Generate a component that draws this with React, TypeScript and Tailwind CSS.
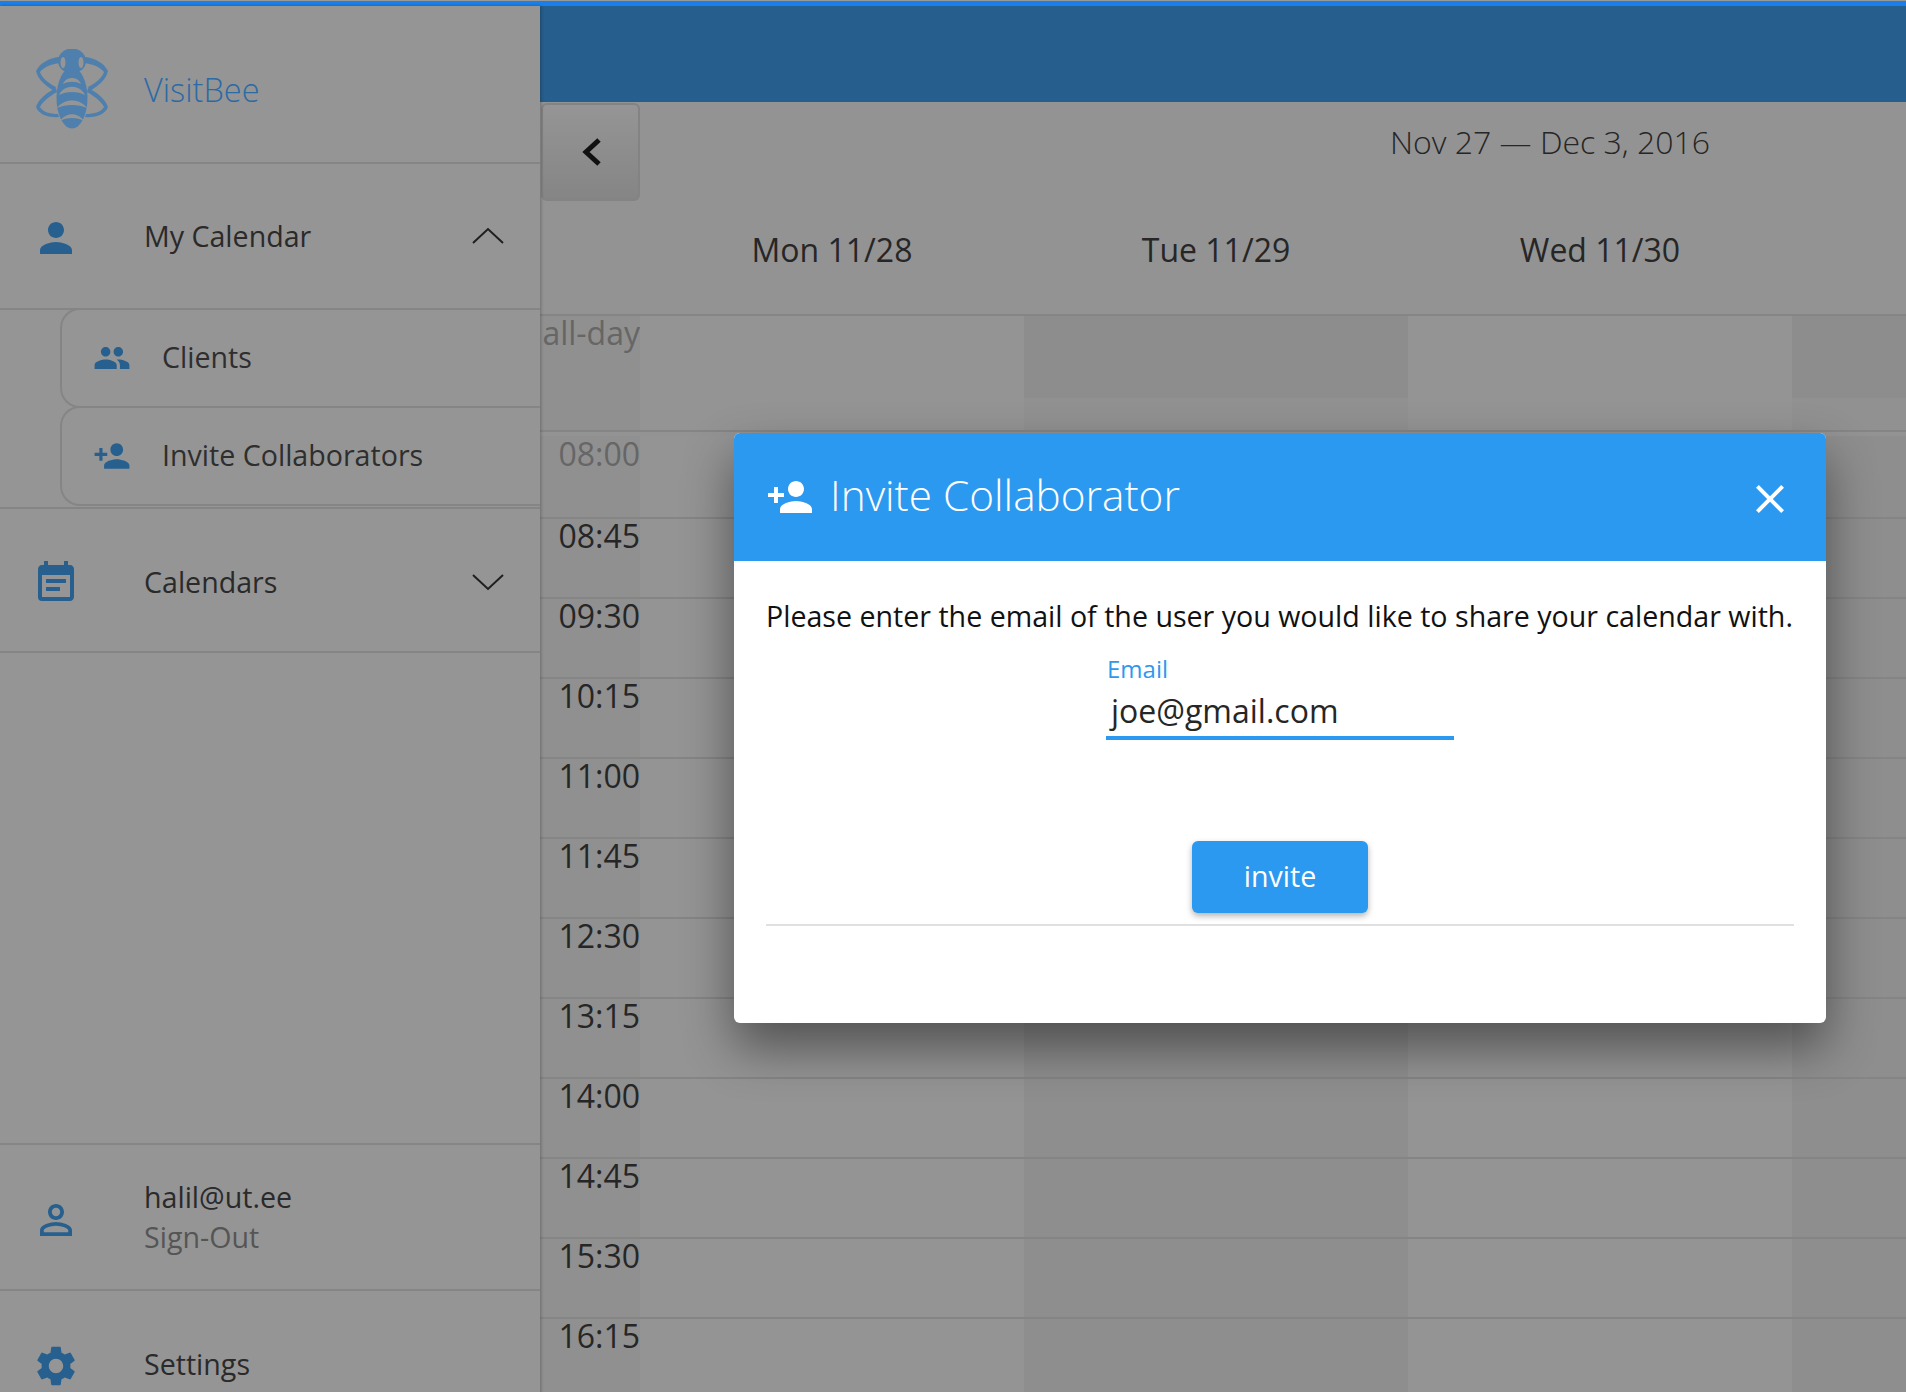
import { MdClose, MdEventNote, MdPeople, MdPerson, MdPersonAdd, MdPersonOutline, MdSettings } from 'react-icons/md';

const times = ['08:45', '09:30', '10:15', '11:00', '11:45', '12:30', '13:15', '14:00', '14:45', '15:30', '16:15'];

function BeeLogo() {
  return (
    <svg width="74" height="80" viewBox="0 0 74 80" fill="none">
      {/* upper wings */}
      <path d="M24 8 C14 9 5 14 1 22 C3 31 11 37 19 42 L21 38 C13 34 7 29 5 23 C9 18 16 15 25 14 Z" fill="#4f80ad" />
      <path d="M50 8 C60 9 69 14 73 22 C71 31 63 37 55 42 L53 38 C61 34 67 29 69 23 C65 18 58 15 49 14 Z" fill="#4f80ad" />
      {/* lower wings */}
      <path d="M21 39 C11 44 3 51 1 58 C4 66 14 69 24 68 L23 65 C15 65 8 63 5 58 C8 52 15 47 22 43 Z" fill="#4f80ad" />
      <path d="M53 39 C63 44 71 51 73 58 C70 66 60 69 50 68 L51 65 C59 65 66 63 69 58 C66 52 59 47 52 43 Z" fill="#4f80ad" />
      {/* body */}
      <ellipse cx="37" cy="49" rx="15.5" ry="30.5" fill="#4f80ad" />
      {/* head */}
      <ellipse cx="37" cy="12" rx="14" ry="12.5" fill="#4f7fac" />
      <ellipse cx="28" cy="13.5" rx="2.5" ry="5.5" fill="#959595" />
      <ellipse cx="46" cy="13.5" rx="2.5" ry="5.5" fill="#959595" />
      {/* stripes */}
      <path d="M28 35 C31 27 43 27 46 35 C41 32 33 32 28 35 Z" fill="#959595" />
      <path d="M24 46 C29 35 45 35 50 46 C43 42 31 42 24 46 Z" fill="#959595" />
      <path d="M22 59 C29 49 45 49 52 59 C44 55 30 55 22 59 Z" fill="#959595" />
      <path d="M25 72 C31 63 43 63 49 72 C43 68 31 68 25 72 Z" fill="#959595" />
    </svg>
  );
}

function SubItem({ icon, label }: { icon: React.ReactNode; label: string }) {
  return (
    <div className="ml-[60px] -mt-[2px] h-[100px] pb-[1px] flex items-center border-2 border-r-0 border-[#858585] rounded-l-[20px]">
      <div className="w-[100px] pl-[31px] flex items-center text-[#27608f]">{icon}</div>
      <span className="text-[28.6px] text-[#2e2e2e]">{label}</span>
    </div>
  );
}

function TimeRow({ label, dim, first }: { label: string; dim?: boolean; first?: boolean }) {
  return (
    <div className={`grid grid-cols-[100px_384px_384px_384px_1fr] border-b-2 border-[#858585] ${first ? 'h-[83px]' : 'h-[80px]'}`}>
      <div className={`bg-[#909090] text-right text-[32px] whitespace-nowrap ${first ? 'leading-[36px]' : 'leading-[34px]'} ${dim ? 'text-[#666666]' : 'text-[#262626]'}`}>{label}</div>
      <div className="bg-[#949494]" />
      <div className="bg-[#8e8e8e]" />
      <div className="bg-[#949494]" />
      <div className="bg-[#8e8e8e]" />
    </div>
  );
}

export default function App() {
  return (
    <div className="relative h-[1392px] w-[1906px] overflow-hidden bg-[#939393] font-['Open_Sans',sans-serif]">
      {/* Progress stripe */}
      <div className="h-[6px] bg-[#1a7fe8] border-t border-[#999999]" />

      <div className="flex">
        {/* Sidebar */}
        <aside className="w-[540px] shrink-0 bg-[#959595] shadow-[1px_0_3px_rgba(0,0,0,0.25)] z-10">
          <div className="h-[158px] pt-[10px] border-b-2 border-[#858585] flex items-center pl-[35px]">
            <BeeLogo />
            <span className="ml-[35px] mt-[2px] text-[32.5px] font-light text-[#2c6aa5]">VisitBee</span>
          </div>

          <div className="h-[146px] border-b-2 border-[#858585] flex items-center">
            <div className="w-[144px] pl-[32px] mt-[4px] text-[#27608f]"><MdPerson size={48} /></div>
            <span className="mt-[1px] text-[28.6px] text-[#2a2a2a]">My Calendar</span>
            <svg className="ml-auto mr-[36px]" width="32" height="18" viewBox="0 0 32 18" fill="none">
              <path d="M1 16 L16 2 L31 16" stroke="#1f1f1f" strokeWidth="2" />
            </svg>
          </div>

          <SubItem icon={<MdPeople size={38} />} label="Clients" />
          <SubItem icon={<MdPersonAdd size={38} />} label="Invite Collaborators" />

          <div className="h-[146px] pt-[4px] border-y-2 border-[#858585] flex items-center mt-[1px]">
            <div className="w-[144px] pl-[32px] mt-[2px] text-[#27608f]"><MdEventNote size={48} /></div>
            <span className="text-[28.6px] text-[#2a2a2a]">Calendars</span>
            <svg className="ml-auto mr-[36px]" width="32" height="18" viewBox="0 0 32 18" fill="none">
              <path d="M1 2 L16 16 L31 2" stroke="#1f1f1f" strokeWidth="2" />
            </svg>
          </div>

          <div className="h-[492px] border-b-2 border-[#858585]" />

          <div className="h-[146px] border-b-2 border-[#858585] flex items-center">
            <div className="w-[144px] pl-[32px] mt-[5px] text-[#27608f]"><MdPersonOutline size={48} /></div>
            <div className="flex flex-col">
              <span className="text-[28.6px] leading-[40px] text-[#2a2a2a]">halil@ut.ee</span>
              <span className="text-[28.6px] leading-[40px] text-[#555555]">Sign-Out</span>
            </div>
          </div>

          <div className="h-[146px] flex items-center">
            <div className="w-[144px] pl-[32px] mt-[4px] text-[#27608f]"><MdSettings size={48} /></div>
            <span className="text-[28.6px] text-[#2a2a2a]">Settings</span>
          </div>
        </aside>

        {/* Calendar */}
        <main className="flex-1 min-w-0">
          <div className="h-[96px] bg-[#265e8d]" />

          <div className="h-[118px] flex items-start">
            <button className="w-[99px] h-[98px] ml-[1px] mt-[1px] rounded-[6px] border-2 border-[#838383] bg-gradient-to-b from-[#959595] to-[#858585] flex items-center justify-center">
              <svg className="ml-[3px]" width="24" height="30" viewBox="0 0 24 30" fill="none">
                <path d="M19 3 L6 15 L19 27" stroke="#111111" strokeWidth="5" />
              </svg>
            </button>
            <div className="ml-[700px] mt-[16px] w-[420px] text-center text-[32px] font-light text-[#262626] whitespace-nowrap">Nov 27 — Dec 3, 2016</div>
          </div>

          <div className="grid grid-cols-[100px_384px_384px_384px_1fr] h-[96px] border-b-2 border-[#858585] text-[32px] text-[#262626] text-center">
            <div />
            <div className="pt-[6px]">Mon 11/28</div>
            <div className="pt-[6px]">Tue 11/29</div>
            <div className="pt-[6px]">Wed 11/30</div>
            <div />
          </div>

          <div className="grid grid-cols-[100px_384px_384px_384px_1fr] h-[116px] border-b-2 border-[#858585] mb-[4px]">
            <div className="bg-[#909090] text-[32px] leading-[33px] text-right text-[#666666] whitespace-nowrap">all-day</div>
            <div className="bg-[#949494]" />
            <div className="bg-gradient-to-b from-[#8d8d8d] from-72% to-[#919191] to-72%" />
            <div className="bg-[#949494]" />
            <div className="bg-gradient-to-b from-[#8d8d8d] from-72% to-[#919191] to-72%" />
          </div>

          <TimeRow label="08:00" dim first />
          {times.map((t) => (
            <TimeRow key={t} label={t} />
          ))}
        </main>
      </div>

      {/* Invite dialog */}
      <div className="absolute left-[734px] top-[433px] w-[1092px] h-[590px] rounded-[6px] bg-white shadow-[0_24px_50px_rgba(0,0,0,0.45)]">
        <div className="h-[128px] rounded-t-[6px] bg-[#2c99f0] flex items-center px-[32px] text-white">
          <MdPersonAdd size={48} />
          <span className="ml-[16px] -mt-[4px] text-[42.3px] font-light">Invite Collaborator</span>
          <MdClose className="ml-auto mt-[4px]" size={48} />
        </div>
        <div className="px-[32px]">
          <p className="mt-[34px] text-[28.6px] text-[#111111] whitespace-nowrap">Please enter the email of the user you would like to share your calendar with.</p>
          <div className="mx-auto mt-[15px] w-[348px]">
            <div className="text-[24px] leading-[32px] text-[#2c99f0] pl-[1px]">Email</div>
            <div className="h-[55px] pt-[5px] border-b-4 border-[#2c99f0] text-[32px] leading-[42px] text-[#262626] pl-[5px]">joe@gmail.com</div>
          </div>
          <div className="mt-[101px] flex justify-center">
            <button className="w-[176px] h-[72px] rounded-[6px] bg-[#2c99f0] text-[28.6px] text-white shadow-[0_3px_6px_rgba(0,0,0,0.3)]">invite</button>
          </div>
          <div className="mt-[11px] h-[2px] bg-[#e0e0e0]" />
        </div>
      </div>
    </div>
  );
}
